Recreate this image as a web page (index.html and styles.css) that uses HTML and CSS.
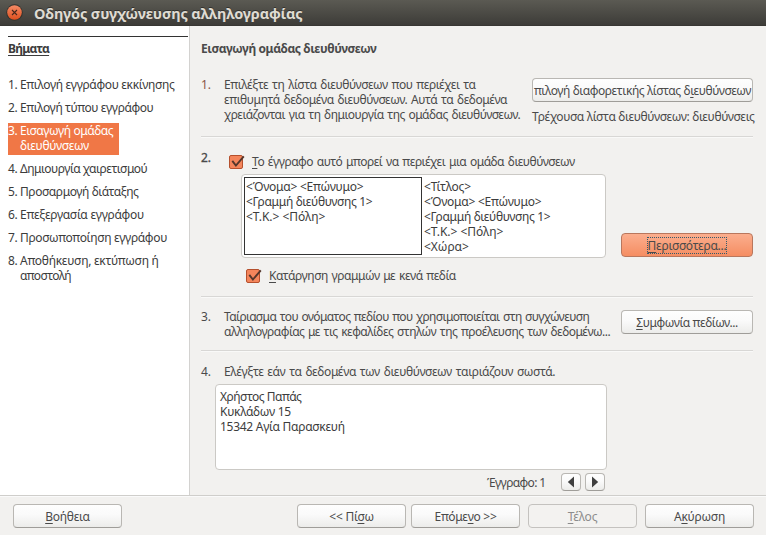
FILE: index.html
```html
<!DOCTYPE html>
<html lang="el">
<head>
<meta charset="utf-8">
<title>Οδηγός συγχώνευσης αλληλογραφίας</title>
<link rel="stylesheet" href="styles.css">
</head>
<body>
<div class="window">
  <header class="titlebar">
    <svg class="close" width="18" height="18" viewBox="0 0 18 18">
      <defs><linearGradient id="orb" x1="0" y1="0" x2="0" y2="1"><stop offset="0" stop-color="#f58b66"/><stop offset="1" stop-color="#dd4f1e"/></linearGradient></defs>
      <circle cx="8.5" cy="8.5" r="8.3" fill="#34332e"/>
      <circle cx="8.5" cy="8.5" r="7.3" fill="url(#orb)"/>
      <path d="M6 6l5 5M11 6l-5 5" stroke="#46281c" stroke-width="1.1"/>
    </svg>
    <h1>Οδηγός συγχώνευσης αλληλογραφίας</h1>
  </header>
  <div class="content">
    <nav class="sidebar">
      <div class="rule"></div>
      <h2 class="tight-7">Βήματα</h2>
      <ol class="steps">
        <li><b>1.</b><span>Επιλογή εγγράφου εκκίνησης</span></li>
        <li><b>2.</b><span class="tight-4">Επιλογή τύπου εγγράφου</span></li>
        <li class="current"><b>3.</b><span class="tight-4">Εισαγωγή ομάδας<br><span class="tight-3">διευθύνσεων</span></span></li>
        <li><b>4.</b><span class="tight-5">Δημιουργία χαιρετισμού</span></li>
        <li><b>5.</b><span class="tight-4">Προσαρμογή διάταξης</span></li>
        <li><b>6.</b><span class="tight-3">Επεξεργασία εγγράφου</span></li>
        <li><b>7.</b><span>Προσωποποίηση εγγράφου</span></li>
        <li><b>8.</b><span class="tight-3">Αποθήκευση, εκτύπωση ή<br><span class="tight-6">αποστολή</span></span></li>
      </ol>
    </nav>
    <main class="page">
      <h2 class="tight-4">Εισαγωγή ομάδας διευθύνσεων</h2>
      <section class="step one">
        <span class="num brown">1.</span>
        <p class="text"><span class="tight-4">Επιλέξτε τη λίστα διευθύνσεων που περιέχει τα</span><br><span class="tight-4">επιθυμητά δεδομένα διευθύνσεων. Αυτά τα δεδομένα</span><br><span class="tight-5">χρειάζονται για τη δημιουργία της ομάδας διευθύνσεων.</span></p>
        <div class="source">
          <button class="btn tight-4"><span>πιλογή διαφορετικής λίστας δ<u>ι</u>ευθύνσεων</span></button>
          <p>Τρέχουσα λίστα διευθύνσεων: διευθύνσεις</p>
        </div>
      </section>
      <section class="step two">
        <span class="num">2.</span>
        <div class="block">
          <label class="check"><svg width="17" height="16" viewBox="0 0 17 16"><rect x=".5" y="1.5" width="13" height="13" rx="1.5" fill="#f4855b" stroke="#b5502d"/><path d="M3.3 6.9l3.6 4.6L14.8 2.3" fill="none" stroke="#54362b" stroke-width="1.9"/></svg><span><u>Τ</u>ο έγγραφο αυτό μπορεί να περιέχει μια ομάδα διευθύνσεων</span></label>
          <div class="blocks">
            <div class="address chosen"><p class="tight-2">&lt;Όνομα&gt; &lt;Επώνυμο&gt;</p><p>&lt;Γραμμή διεύθυνσης 1&gt;</p><p class="tight-0">&lt;Τ.Κ.&gt; &lt;Πόλη&gt;</p></div>
            <div class="address"><p class="tight-2">&lt;Τίτλος&gt;</p><p class="tight-2">&lt;Όνομα&gt; &lt;Επώνυμο&gt;</p><p>&lt;Γραμμή διεύθυνσης 1&gt;</p><p class="tight-0">&lt;Τ.Κ.&gt; &lt;Πόλη&gt;</p><p class="tight-0">&lt;Χώρα&gt;</p></div>
          </div>
          <label class="check inner"><svg width="17" height="16" viewBox="0 0 17 16"><rect x=".5" y="1.5" width="13" height="13" rx="1.5" fill="#f4855b" stroke="#b5502d"/><path d="M3.3 6.9l3.6 4.6L14.8 2.3" fill="none" stroke="#54362b" stroke-width="1.9"/></svg><span><u>Κ</u>ατάργηση γραμμών με κενά πεδία</span></label>
        </div>
        <button class="btn side focused tight-2"><span><u>Π</u>ερισσότερα...</span></button>
      </section>
      <section class="step three">
        <span class="num">3.</span>
        <p class="text"><span class="tight-6">Ταίριασμα του ονόματος πεδίου που χρησιμοποιείται στη συγχώνευση</span><br><span class="tight-5">αλληλογραφίας με τις κεφαλίδες στηλών της προέλευσης των δεδομένω...</span></p>
        <button class="btn side tight-4"><span><u>Σ</u>υμφωνία πεδίων...</span></button>
      </section>
      <section class="step four">
        <span class="num">4.</span>
        <p class="text"><span>Ελέγξτε εάν τα δεδομένα των διευθύνσεων ταιριάζουν σωστά.</span></p>
      </section>
      <div class="preview"><p class="tight-5">Χρήστος Παπάς</p><p class="tight-3">Κυκλάδων 15</p><p class="tight-3">15342 Αγία Παρασκευή</p></div>
      <div class="pager">
        <span class="tight-6">Έγγραφο: 1</span>
        <button class="btn arrow"><svg width="8" height="12" viewBox="0 0 8 12"><path d="M7 .5v11L.8 6z" fill="#3f3f3f"/></svg></button>
        <button class="btn arrow"><svg width="8" height="12" viewBox="0 0 8 12"><path d="M1 .5v11L7.2 6z" fill="#3f3f3f"/></svg></button>
      </div>
    </main>
  </div>
  <footer class="actions">
    <button class="btn help tight-2"><span><u>Β</u>οήθεια</span></button>
    <button class="btn tight-2"><span>&lt;&lt; Πί<u>σ</u>ω</span></button>
    <button class="btn next tight-3"><span>Επόμε<u>ν</u>ο &gt;&gt;</span></button>
    <button class="btn finish tight-2" disabled><span><u>Τ</u>έλος</span></button>
    <button class="btn tight-2"><span>Α<u>κ</u>ύρωση</span></button>
  </footer>
</div>
</body>
</html>
```
FILE: styles.css
```css
* { box-sizing: border-box; }
body, h1, h2, p, ol { margin: 0; padding: 0; }
body { background: #f2f1ef; color: #4a4a4a; font: 12px/15px "Noto Sans", sans-serif; letter-spacing: -.34px; white-space: nowrap; }
u { text-decoration: underline; text-underline-offset: 2px; text-decoration-thickness: 1px; text-decoration-skip-ink: none; }

.tight-0 { letter-spacing: -.03px; }
.tight-2 { letter-spacing: -.23px; }
.tight-3 { letter-spacing: -.28px; }
.tight-4 { letter-spacing: -.4px; }
.tight-5 { letter-spacing: -.49px; }
.tight-6 { letter-spacing: -.62px; }
.tight-7 { letter-spacing: -.75px; }

.window { width: 766px; height: 535px; display: flex; flex-direction: column; overflow: hidden; }
.titlebar { height: 26px; display: flex; align-items: center; padding-left: 6px; gap: 10px; background: linear-gradient(#5b5a53, #3d3c38); border-bottom: 1px solid #383733; }
.titlebar h1 { font-size: 14.5px; line-height: 24px; letter-spacing: -.15px; color: #dfdbd2; text-shadow: 0 -1px #33322e; }

.content { height: 469px; display: flex; }
.sidebar { width: 189px; padding: 10px 0 0 8px; background: #fff; color: #3c3c3c; }
.rule { height: 1px; width: 180px; background: #333; }
h2 { font-size: 12px; line-height: 15px; font-weight: 700; }
.sidebar h2 { margin-top: 4px; text-decoration: underline; text-underline-offset: 2px; text-decoration-thickness: 1px; text-decoration-skip-ink: none; }
.steps { list-style: none; margin-top: 21px; display: flex; flex-direction: column; align-items: flex-start; gap: 8px; }
.steps li { display: flex; }
.steps b { width: 12px; font-weight: 400; }
.steps .current { width: 111px; height: 32px; margin-bottom: -2px; background: #f07746; color: #fff; }

.page { width: 577px; padding: 15px 13px 0 11px; border-left: 1px solid #d3d2d0; }
.step { display: flex; border-bottom: 1px solid #d8d7d5; box-shadow: 0 1px #f9f9f8; }
.num { width: 23px; flex: none; letter-spacing: 0; }
.brown { color: #8a5648; }
.text { flex: 1; word-spacing: 1px; }
.one { margin-top: 21px; height: 60px; }
.source { width: 221px; flex: none; padding-top: 1px; }
.source .btn { width: 221px; }
.source p { margin-top: 7px; }
.two { height: 160px; }
.two .num { padding-top: 13px; -webkit-text-stroke: .3px; }
.block { flex: 1; padding-top: 17px; }
.check { display: flex; height: 15px; margin-left: 5px; word-spacing: 1px; letter-spacing: -.46px; }
.check svg { flex: none; margin-right: 6px; }
.check.inner { margin: 10px 0 0 22px; }
.blocks { display: flex; gap: 1px; width: 365px; height: 84px; margin: 5px 0 0 17px; padding: 2px; background: #fff; border: 1px solid #cbc9c5; border-radius: 4px; color: #3c3c3c; }
.address { width: 178px; padding: 2px 1px; }
.address.chosen { border: 1px solid #333; padding: 1px; }
.btn { height: 24px; width: 109px; padding: 0; display: flex; align-items: center; justify-content: center; overflow: hidden; font-family: inherit; font-size: 12px; line-height: 15px; color: #4a4a4a; background: linear-gradient(#fefefe, #fafafa 45%, #ececea); border: 1px solid #b9b7b3; border-bottom-color: #9f9d99; border-radius: 4px; white-space: nowrap; }
.btn.side { width: 132px; flex: none; }
.focused { margin-top: 96px; background: linear-gradient(#fbae8e, #f58d62); border-color: #b9775d; }
.focused span { outline: 1px dotted #335a6c; }
.three { padding-top: 12px; height: 54px; }
.three .btn { margin-top: 1px; }
.four { padding-top: 13px; height: 33px; border: 0; box-shadow: none; }
.preview { width: 392px; height: 86px; margin-left: 14px; padding: 4px; background: #fff; border: 1px solid #cbc9c5; border-radius: 4px; color: #3c3c3c; }
.pager { display: flex; align-items: center; height: 18px; margin: 3px 0 0 286px; gap: 4px; }
.pager span { width: 70px; }
.pager .arrow { width: 20px; height: 18px; }

.actions { flex: 1; display: flex; padding: 8px 12px 0 13px; border-top: 1px solid #cfcecb; box-shadow: inset 0 1px #fafafa; }
.help { margin-right: 175px; }
.next { margin-left: 5px; }
.finish { margin: 0 8px; }
.finish:disabled { color: #8c8c8c; background: #f3f2f0; border-color: #c4c2bf; }
```
